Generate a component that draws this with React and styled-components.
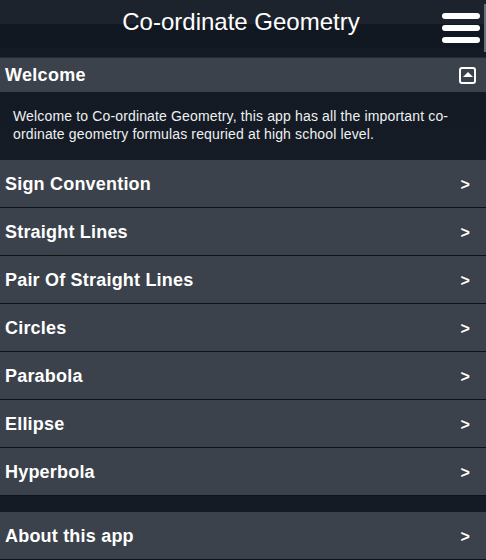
import React from "react";
import styled, { createGlobalStyle } from "styled-components";

const Global = createGlobalStyle`
  html, body { margin: 0; padding: 0; background: #131a22; }
  body { font-family: "Liberation Sans", Arial, sans-serif; width: 486px; height: 560px; overflow: hidden; }
  * { box-sizing: border-box; }
`;

const Page = styled.div`
  width: 486px;
  display: flex;
  flex-direction: column;
`;

const Header = styled.header`
  position: relative;
  height: 58px;
  display: flex;
  align-items: center;
  justify-content: center;
  background: linear-gradient(to bottom, #1c232d 0px, #1c232d 24px, #121821 24px, #121821 48px, #151b24 48px, #151b24 57px, #222a33 57px);
`;

const Title = styled.h1`
  margin: 0;
  margin-top: -14px;
  margin-left: -4px;
  font-size: 24px;
  font-weight: normal;
  color: #ffffff;
`;

const Burger = styled.button`
  position: absolute;
  right: 6px;
  top: 13px;
  width: 38px;
  padding: 0;
  border: 0;
  background: none;
  display: flex;
  flex-direction: column;
  gap: 6px;
`;

const Bar = styled.span`
  display: block;
  height: 6px;
  width: 38px;
  border-radius: 3px;
  background: #ffffff;
`;

const ScrollEdge = styled.span`
  position: absolute;
  right: 0;
  top: 4px;
  width: 2px;
  height: 48px;
  background: #6a7078;
`;

const SectionHead = styled.div`
  height: 34px;
  display: flex;
  align-items: center;
  justify-content: space-between;
  padding: 0 10px 0 5px;
  background: #3b424b;
`;

const HeadText = styled.span`
  color: #ffffff;
  font-weight: bold;
  font-size: 18px;
  letter-spacing: 0.3px;
`;

const CollapseBox = styled.span`
  width: 17px;
  height: 17px;
  border: 2px solid #ffffff;
  border-radius: 3px;
  display: flex;
  align-items: center;
  justify-content: center;
  margin-top: 1px;
`;

const Tri = styled.span`
  width: 0;
  height: 0;
  border-left: 5px solid transparent;
  border-right: 5px solid transparent;
  border-bottom: 5px solid #ffffff;
  margin-top: -2px;
`;

const Content = styled.div`
  height: 68px;
  padding: 15px 24px 0 13px;
  background: linear-gradient(to bottom, #131a23, #151c25);
  color: #eef0f2;
  font-size: 14px;
  line-height: 18px;
  letter-spacing: 0.15px;
`;

const List = styled.ul`
  list-style: none;
  margin: 0;
  padding: 0;
`;

const Item = styled.li`
  height: 48px;
  display: flex;
  align-items: center;
  justify-content: space-between;
  padding: 2px 16px 0 5px;
  background: #3b424b;
  border-bottom: 1px solid #0e1217;
  color: #ffffff;
  font-weight: bold;
  font-size: 18px;
  letter-spacing: 0.2px;
`;

const Arrow = styled.span`
  font-size: 16px;
  font-weight: bold;
`;

const Gap = styled.div`
  height: 16px;
  background: #141b24;
`;

const topics = [
  "Sign Convention",
  "Straight Lines",
  "Pair Of Straight Lines",
  "Circles",
  "Parabola",
  "Ellipse",
  "Hyperbola",
];

export default function App() {
  return (
    <Page>
      <Global />
      <Header>
        <Title>Co-ordinate Geometry</Title>
        <Burger aria-label="menu">
          <Bar />
          <Bar />
          <Bar />
        </Burger>
        <ScrollEdge />
      </Header>
      <SectionHead>
        <HeadText>Welcome</HeadText>
        <CollapseBox>
          <Tri />
        </CollapseBox>
      </SectionHead>
      <Content>
        Welcome to Co-ordinate Geometry, this app has all the important co-ordinate geometry formulas requried at high school level.
      </Content>
      <List>
        {topics.map((t) => (
          <Item key={t}>
            {t}
            <Arrow>&gt;</Arrow>
          </Item>
        ))}
      </List>
      <Gap />
      <List>
        <Item>
          About this app
          <Arrow>&gt;</Arrow>
        </Item>
      </List>
    </Page>
  );
}
